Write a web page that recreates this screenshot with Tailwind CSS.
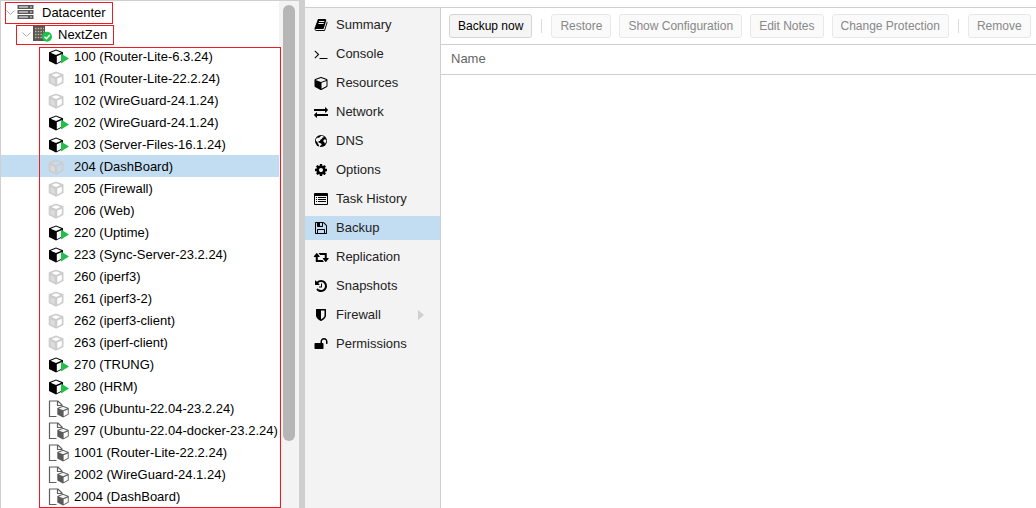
<!DOCTYPE html>
<html lang="en">
<head>
<meta charset="utf-8">
<title>Datacenter</title>
<script src="https://cdn.jsdelivr.net/npm/@tailwindcss/browser@4"></script>
</head>
<body class="h-screen overflow-hidden bg-white font-['Liberation_Sans',Arial,sans-serif] text-[13px] leading-5 text-black">
<svg class="hidden" aria-hidden="true">
  <symbol id="cube" viewBox="0 0 1664 1792"><path d="M896 1629l640-349v-636l-640 233v752zm-64-865l698-254-698-254-698 254zm832-252v768q0 35-18 65t-49 47l-704 384q-28 16-61 16t-61-16l-704-384q-31-17-49-47t-18-65v-768q0-40 23-73t61-47l704-256q22-8 44-8t44 8l704 256q38 14 61 47t23 73z"/></symbol>
  <symbol id="vm-on" viewBox="0 0 21 16"><path d="M8 .5L15 3.200V12L8 15.500 1 12V3.200z" fill="#000"/><path d="M8 1.600L13.300 3.700 8 5.900 2.700 3.700z" fill="#fff"/><path d="M8.800 7.200L14 5v6.500l-5.200 2.800z" fill="#fff"/><path d="M13 4.500l8 5-8 5z" fill="#21bf4b"/></symbol>
  <symbol id="vm-off" viewBox="0 0 21 16"><path fill-rule="evenodd" d="M8 .5L15.500 3.300V12L8 15.700.700 12V3.300zM8 2.300L3.600 4.100 8 5.900l4.500-1.800zM9.300 7.500v5.900l4.500-2.300V5.700z" fill="#cdcdcd"/><path d="M2.600 6.300l4.100 1.700v5.300L2.600 11.200z" fill="#dcdcdc"/></symbol>
  <symbol id="template" viewBox="0 0 21 18"><path d="M8.500 16.500H1.500v-15.500h8.500l4 4v1M9.500 1v4.500H14" fill="none" stroke="#5f5f5f" stroke-width="1.200"/><path d="M15 5.800l5.700 2.200v6.500L15 17.500l-5.700-3V8z" fill="#5a5a5a"/><path d="M15 6.800l4.300 1.700L15 10.200l-4.300-1.700z" fill="#f1f1f1"/><path d="M15.600 11.200l4.200-1.700v4.500l-4.200 2.300z" fill="#fff"/></symbol>
</svg>
<div class="flex h-full">
  <nav aria-label="Server tree" class="flex w-[299px] shrink-0 border-t border-l border-[#cfcfcf]">
    <div class="min-w-0 grow">
      <div class="relative flex h-[22px] items-center pl-1">
        <svg class="mr-px size-[11px]" viewBox="0 0 11 11" fill="none" stroke="#aaa"><path d="M1.500 3.500l4 4 4-4"/></svg>
        <svg class="h-[14px] w-[17px]" viewBox="0 0 17 14"><path fill="#5a5a5a" d="M.5 0h16v4H.5zM.5 5h16v4H.5zM.5 10h16v4H.5z"/><path stroke="#fff" d="M2 2h9M2 7h9M2 12h9"/><path stroke="#ddd" d="M13 2h2M13 7h2M13 12h2"/></svg>
        <span class="ml-2 pt-[2px]">Datacenter</span>
        <span class="pointer-events-none absolute top-px left-1 h-[22px] w-[108px] border border-[#ec1c24]"></span>
      </div>
      <div class="relative flex h-[22px] items-center pl-5">
        <svg class="size-[11px]" viewBox="0 0 11 11" fill="none" stroke="#aaa"><path d="M1.500 3.500l4 4 4-4"/></svg>
        <svg class="h-4 w-5" viewBox="0 0 20 16"><path fill="#555" d="M1 0h12v15H1z"/><path stroke="#d0b48c" stroke-width="1.300" stroke-dasharray="1.500 1.200" d="M3 2.500h9M3 5.500h9M3 8.500h9M3 11.500h9"/><circle cx="15" cy="10.700" r="5" fill="#21bf4b"/><path d="M12.500 10.700l2 2 3.300-3.700" fill="none" stroke="#fff" stroke-width="1.500"/></svg>
        <span class="ml-[6px] pt-[2px]">NextZen</span>
        <span class="pointer-events-none absolute top-[2px] left-[15px] h-5 w-[98px] border border-[#ec1c24]"></span>
      </div>
      <div class="relative">
        <ul id="guests"></ul>
        <span class="pointer-events-none absolute top-[2px] -bottom-px left-[38px] w-[242px] border border-[#ec1c24]"></span>
      </div>
    </div>
    <div class="w-5 shrink-0 bg-[#f3f3f3] pt-1 pl-1"><div class="h-[436px] w-3 rounded-full bg-[#b6b6b6]"></div></div>
  </nav>
  <div class="w-[6px] shrink-0 bg-[#cfcfcf]"></div>
  <main class="flex min-w-0 grow flex-col pt-[7px]">
    <div class="flex grow border-t border-[#cfcfcf]">
      <nav aria-label="Guest menu" class="w-[136px] shrink-0 border-r border-[#cfcfcf] bg-[#f3f3f3] pt-[5px]">
        <ul class="flex flex-col gap-[5px] leading-6 text-[#222]">
          <li><a href="#summary" class="flex items-center pl-2"><svg class="mr-[7px] h-[14px] w-4" viewBox="0 0 1792 1792"><path d="M1703 478q40 57 18 129l-275 906q-19 64-76.500 107.500t-122.500 43.500h-923q-77 0-148.500-53.500t-99.500-131.500q-24-67-2-127 0-4 3-27t4-37q1-8-3-21.500t-3-19.500q2-11 8-21t16.500-23.500 16.500-23.500q23-38 45-91.500t30-91.500q3-10 .5-30t-.5-28q3-11 17-28t17-23q21-36 42-92t25-90q1-9-2.500-32t.5-28q4-13 22-30.500t22-22.500q19-26 42.500-84.500t27.500-96.500q1-8-3-25.500t-2-26.500q2-8 9-18t18-23 17-21q8-12 16.500-30.500t15-35 16-36 19.500-32 26.500-23.500 36-11.500 47.500 5.500l-1 3q38-9 51-9h761q74 0 114 56t18 130l-274 906q-36 119-71.500 153.500t-128.500 34.500h-869q-27 0-38 15-11 16-1 43 24 70 144 70h923q29 0 56-15.500t35-41.500l300-987q7-22 5-57 38 15 59 43zm-1064 2q-4 13 2 22.500t20 9.500h608q13 0 25.500-9.500t16.500-22.500l21-64q4-13-2-22.500t-20-9.500h-608q-13 0-25.500 9.500t-16.500 22.500zm-83 256q-4 13 2 22.500t20 9.500h608q13 0 25.500-9.500t16.500-22.500l21-64q4-13-2-22.500t-20-9.500h-608q-13 0-25.500 9.500t-16.500 22.500z"/></svg>Summary</a></li>
          <li><a href="#console" class="flex items-center pl-2"><svg class="mr-[7px] h-[14px] w-4" viewBox="0 0 1792 1792"><path d="M649 983l-466 466q-10 10-23 10t-23-10l-50-50q-10-10-10-23t10-23l393-393-393-393q-10-10-10-23t10-23l50-50q10-10 23-10t23 10l466 466q10 10 10 23t-10 23zm1079 457v64q0 14-9 23t-23 9h-960q-14 0-23-9t-9-23v-64q0-14 9-23t23-9h960q14 0 23 9t9 23z"/></svg>Console</a></li>
          <li><a href="#resources" class="flex items-center pl-2"><svg class="mr-[7px] h-[14px] w-4"><use href="#cube"/></svg>Resources</a></li>
          <li><a href="#network" class="flex items-center pl-2"><svg class="mr-[7px] h-[14px] w-4" viewBox="0 0 1792 1792"><path d="M1792 1184v192q0 13-9.500 22.500t-22.500 9.500h-1376v192q0 13-9.500 22.500t-22.500 9.500q-12 0-24-10l-319-320q-9-9-9-22 0-14 9-23l320-320q9-9 23-9 13 0 22.500 9.500t9.500 22.500v192h1376q13 0 22.500 9.500t9.500 22.500zm0-544q0 14-9 23l-320 320q-9 9-23 9-13 0-22.500-9.500t-9.500-22.500v-192h-1376q-13 0-22.500-9.500t-9.500-22.500v-192q0-13 9.500-22.500t22.500-9.500h1376v-192q0-14 9-23t23-9q12 0 24 10l319 319q9 9 9 23z"/></svg>Network</a></li>
          <li><a href="#dns" class="flex items-center pl-2"><svg class="mr-[7px] h-[14px] w-4" viewBox="0 0 14 14"><circle cx="7" cy="7" r="6" fill="#000"/><path fill="#f3f3f3" d="M7 1.800l2 .2 1 1.200-1.500.3-.5 1.300-1.600 1-.5 1.300-1.600.2.200 1.300 1.500.3 1.800 1-.6 1.400-1.200.8-.2 1.200-.6-.2-.4-2-1-1.500-.4-1.500L2 7l-.1-1.500L3.200 3.500l1 .5L6 3zM9.500 6l1.500-.7 1.300.7-.2 2-1.200 1.800-.6-1.500-1-.7z"/></svg>DNS</a></li>
          <li><a href="#options" class="flex items-center pl-2"><svg class="mr-[7px] h-[14px] w-4" viewBox="0 0 1792 1792"><path d="M1152 896q0-106-75-181t-181-75-181 75-75 181 75 181 181 75 181-75 75-181zm512-109v222q0 12-8 23t-20 13l-185 28q-19 54-39 91 35 50 107 138 10 12 10 25t-9 23q-27 37-99 108t-94 71q-12 0-26-9l-138-108q-44 23-91 38-16 136-29 186-7 28-36 28h-222q-14 0-24.500-8.500t-11.500-21.500l-28-184q-49-16-90-37l-141 107q-10 9-25 9-14 0-25-11-126-114-165-168-7-10-7-23 0-12 8-23 15-21 51-66.500t54-70.500q-27-50-41-99l-183-27q-13-2-21-12.500t-8-23.500v-222q0-12 8-23t19-13l186-28q14-46 39-92-40-57-107-138-10-12-10-24 0-10 9-23 26-36 98.500-107.500t94.500-71.500q13 0 26 10l138 107q44-23 91-38 16-136 29-186 7-28 36-28h222q14 0 24.500 8.500t11.500 21.500l28 184q49 16 90 37l142-107q9-9 24-9 13 0 25 10 129 119 165 170 7 8 7 22 0 12-8 23-15 21-51 66.500t-54 70.500q26 50 41 98l183 28q13 2 21 12.500t8 23.500z"/></svg>Options</a></li>
          <li><a href="#tasks" class="flex items-center pl-2"><svg class="mr-[7px] h-[14px] w-4" viewBox="0 0 16 14"><path fill-rule="evenodd" d="M2 1h12q1 0 1 1v10q0 1-1 1H2q-1 0-1-1V2q0-1 1-1zm0 3v8h12V4z"/><path stroke="#000" d="M3 5.500h1M5 5.500h8M3 7.500h1M5 7.500h8M3 9.500h1M5 9.500h8"/></svg>Task History</a></li>
          <li><a href="#backup" aria-current="page" class="flex items-center bg-[#c2ddf2] pl-2"><svg class="mr-[7px] h-[14px] w-4" viewBox="0 0 1792 1792"><path d="M512 1536h768v-384h-768v384zm896 0h128v-896q0-14-10-38.500t-20-34.500l-281-281q-10-10-34-20t-39-10v416q0 40-28 68t-68 28h-576q-40 0-68-28t-28-68v-416h-128v1280h128v-416q0-40 28-68t68-28h832q40 0 68 28t28 68v416zm-384-928v-320q0-13-9.500-22.500t-22.500-9.500h-192q-13 0-22.500 9.500t-9.500 22.500v320q0 13 9.500 22.500t22.500 9.500h192q13 0 22.500-9.500t9.500-22.500zm640 32v928q0 40-28 68t-68 28h-1344q-40 0-68-28t-28-68v-1344q0-40 28-68t68-28h928q40 0 88 20t76 48l280 280q28 28 48 76t20 88z"/></svg>Backup</a></li>
          <li><a href="#replication" class="flex items-center pl-2"><svg class="mr-[7px] h-[14px] w-4" viewBox="0 0 1984 1792"><path d="M1344 1504q0 13-9.500 22.500t-22.500 9.500h-960q-8 0-13.500-2t-9-7-5.500-8-3-11.500-1-11.500v-600h-192q-26 0-45-19t-19-45q0-24 15-41l320-384q19-22 49-22t49 22l320 384q15 17 15 41 0 26-19 45t-45 19h-192v384h576q16 0 25 11l160 192q7 10 7 21zm640-416q0 24-15 41l-320 384q-20 23-49 23t-49-23l-320-384q-15-17-15-41 0-26 19-45t45-19h192v-384h-576q-16 0-25-12l-160-192q-7-9-7-20 0-13 9.500-22.500t22.500-9.500h960q8 0 13.500 2t9 7 5.500 8 3 11.500 1 11.500v600h192q26 0 45 19t19 45z"/></svg>Replication</a></li>
          <li><a href="#snapshots" class="flex items-center pl-2"><svg class="mr-[7px] h-[14px] w-4" viewBox="0 0 1792 1792"><path d="M1664 896q0 156-61 298t-164 245-245 164-298 61q-172 0-327-72.500t-264-204.500q-7-10-6.500-22.500t8.500-20.500l137-138q10-9 25-9 16 2 23 12 73 95 179 147t225 52q104 0 198.500-40.500t163.500-109.500 109.500-163.500 40.500-198.500-40.500-198.500-109.500-163.500-163.500-109.500-198.500-40.500q-98 0-188 35.500t-160 101.500l137 138q31 30 14 69-17 40-59 40h-448q-26 0-45-19t-19-45v-448q0-42 40-59 39-17 69 14l130 129q107-101 244.500-156.500t284.500-55.500q156 0 298 61t245 164 164 245 61 298zm-640-288v448q0 14-9 23t-23 9h-320q-14 0-23-9t-9-23v-64q0-14 9-23t23-9h224v-352q0-14 9-23t23-9h64q14 0 23 9t9 23z"/></svg>Snapshots</a></li>
          <li><a href="#firewall" class="flex items-center pl-2"><svg class="mr-[7px] h-[14px] w-4" viewBox="0 0 1792 1792"><path d="M1344 960v-640h-448v1137q119-63 213-137 235-184 235-360zm192-768v768q0 86-33.500 170.500t-83 150-118 127.500-126.500 103-121 77.500-89.500 49.500-42.500 20q-12 6-26 6t-26-6q-16-7-42.500-20t-89.500-49.500-121-77.500-126.500-103-118-127.500-83-150-33.500-170.500v-768q0-26 19-45t45-19h1152q26 0 45 19t19 45z"/></svg>Firewall<svg class="mr-4 ml-auto h-[10px] w-[6px]" viewBox="0 0 6 10"><path fill="#cfcfcf" d="M0 0l6 5-6 5z"/></svg></a></li>
          <li><a href="#permissions" class="flex items-center pl-2"><svg class="mr-[7px] h-[14px] w-4" viewBox="0 0 1792 1792"><path d="M1728 576v256q0 26-19 45t-45 19h-64q-26 0-45-19t-19-45v-256q0-106-75-181t-181-75-181 75-75 181v192h96q40 0 68 28t28 68v576q0 40-28 68t-68 28h-960q-40 0-68-28t-28-68v-576q0-40 28-68t68-28h672v-192q0-185 131.500-316.500t316.500-131.500 316.500 131.500 131.500 316.500z"/></svg>Permissions</a></li>
        </ul>
      </nav>
      <section class="min-w-0 grow">
        <div class="flex h-[37px] items-center gap-2 border-b border-[#cfcfcf] pl-2 text-xs whitespace-nowrap">
          <button class="h-6 rounded-[3px] border border-[#d5d5d5] bg-[#f5f5f5] px-2 text-black">Backup now</button>
          <span class="mx-px h-[14px] w-px bg-[#dcdcdc]"></span>
          <button disabled class="h-6 rounded-[3px] border border-[#e8e8e8] bg-[#fafafa] px-2 text-[#888]">Restore</button>
          <button disabled class="h-6 rounded-[3px] border border-[#e8e8e8] bg-[#fafafa] px-2 text-[#888]">Show Configuration</button>
          <button disabled class="h-6 rounded-[3px] border border-[#e8e8e8] bg-[#fafafa] px-2 text-[#888]">Edit Notes</button>
          <button disabled class="h-6 rounded-[3px] border border-[#e8e8e8] bg-[#fafafa] px-2 text-[#888]">Change Protection</button>
          <span class="mx-px h-[14px] w-px bg-[#dcdcdc]"></span>
          <button disabled class="h-6 rounded-[3px] border border-[#e8e8e8] bg-[#fafafa] px-2 text-[#888]">Remove</button>
        </div>
        <table class="w-full"><thead><tr><th scope="col" class="h-[29px] border-b border-[#cfcfcf] pl-[10px] text-left font-normal text-[#666]">Name</th></tr></thead></table>
      </section>
    </div>
  </main>
</div>
<script>
const guests = [
  ["on", "100 (Router-Lite-6.3.24)"], ["off", "101 (Router-Lite-22.2.24)"], ["off", "102 (WireGuard-24.1.24)"],
  ["on", "202 (WireGuard-24.1.24)"], ["on", "203 (Server-Files-16.1.24)"], ["off", "204 (DashBoard)", true],
  ["off", "205 (Firewall)"], ["off", "206 (Web)"], ["on", "220 (Uptime)"], ["on", "223 (Sync-Server-23.2.24)"],
  ["off", "260 (iperf3)"], ["off", "261 (iperf3-2)"], ["off", "262 (iperf3-client)"], ["off", "263 (iperf-client)"],
  ["on", "270 (TRUNG)"], ["on", "280 (HRM)"], ["tpl", "296 (Ubuntu-22.04-23.2.24)"],
  ["tpl", "297 (Ubuntu-22.04-docker-23.2.24)"], ["tpl", "1001 (Router-Lite-22.2.24)"],
  ["tpl", "2002 (WireGuard-24.1.24)"], ["tpl", "2004 (DashBoard)"]
];
const icons = {
  on: '<svg class="mt-[2px] h-4 w-[21px]"><use href="#vm-on"/></svg>',
  off: '<svg class="mt-[2px] h-4 w-[21px]"><use href="#vm-off"/></svg>',
  tpl: '<svg class="mt-[2px] h-[18px] w-[21px]"><use href="#template"/></svg>'
};
document.getElementById("guests").innerHTML = guests.map(([state, name, selected]) =>
  `<li class="${selected ? "flex h-[22px] items-center gap-[5px] whitespace-nowrap pl-[47px] bg-[#c2ddf2]" : "flex h-[22px] items-center gap-[5px] whitespace-nowrap pl-[47px]"}">${icons[state]}<span class="pt-[2px]">${name}</span></li>`
).join("");
</script>
</body>
</html>
